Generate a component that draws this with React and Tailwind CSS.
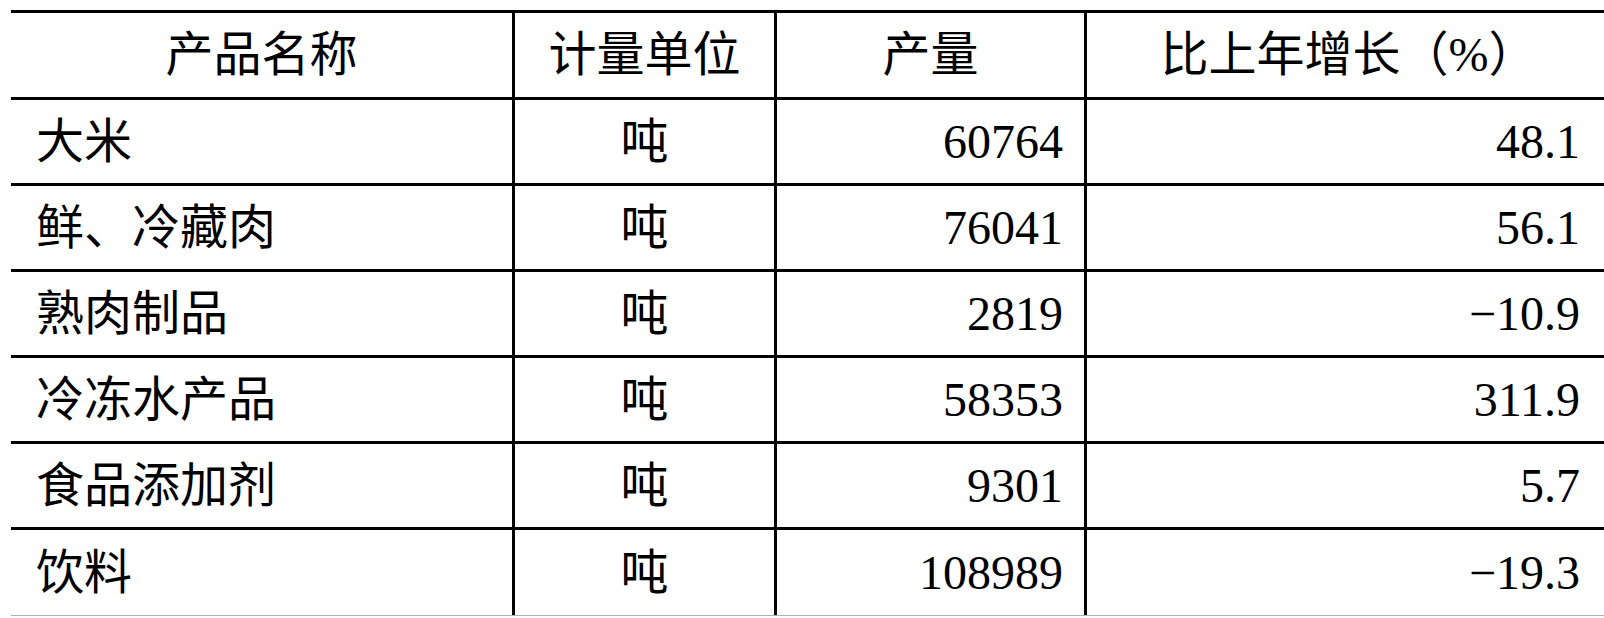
const rows = [
  { name: '大米', unit: '吨', output: '60764', growth: '48.1' },
  { name: '鲜、冷藏肉', unit: '吨', output: '76041', growth: '56.1' },
  { name: '熟肉制品', unit: '吨', output: '2819', growth: '−10.9' },
  { name: '冷冻水产品', unit: '吨', output: '58353', growth: '311.9' },
  { name: '食品添加剂', unit: '吨', output: '9301', growth: '5.7' },
  { name: '饮料', unit: '吨', output: '108989', growth: '−19.3' },
];

const cols = 'grid grid-cols-[501px_262px_310px_1fr]';

export default function App() {
  return (
    <div className="w-[1604px] h-[618px] bg-white overflow-hidden font-[family-name:'Liberation_Serif','Noto_Sans_CJK_SC',serif] text-black">
      <div className="ml-[11px] mt-[10px] border-t-[3px] border-black">
        <div className={`${cols} h-[87px] border-b-[3px] border-black text-[48px] leading-none`}>
          <div className="flex items-center justify-center">产品名称</div>
          <div className="flex items-center justify-center border-l-[3px] border-black">计量单位</div>
          <div className="flex items-center justify-center border-l-[3px] border-black">产量</div>
          <div className="flex items-center justify-center border-l-[3px] border-black pl-[6px]">比上年增长（%）</div>
        </div>
        {rows.map((r, i) => (
          <div
            key={r.name}
            className={`${cols} h-[86px] text-[48px] leading-none ${
              i === rows.length - 1 ? 'border-b border-[#b0b0b0]' : 'border-b-[3px] border-black'
            }`}
          >
            <div className="flex items-center pl-[25px]">{r.name}</div>
            <div className="flex items-center justify-center border-l-[3px] border-black">{r.unit}</div>
            <div className="flex items-center justify-end pr-[21px] border-l-[3px] border-black">{r.output}</div>
            <div className="flex items-center justify-end pr-[24px] border-l-[3px] border-black">{r.growth}</div>
          </div>
        ))}
      </div>
    </div>
  );
}
